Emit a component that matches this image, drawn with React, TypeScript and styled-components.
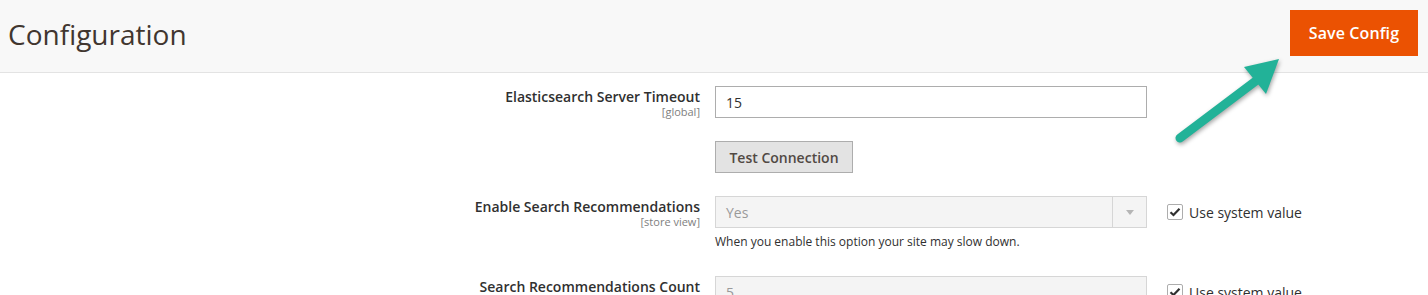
import React from 'react'
import styled, { createGlobalStyle } from 'styled-components'

const GlobalStyle = createGlobalStyle`
   html, body {
      margin: 0;
      padding: 0;
      background: #fff;
      font-family: "Open Sans", "Noto Sans", sans-serif;
      color: #303030;
      overflow: hidden;
   }
`

const Page = styled.div`
   position: relative;
   width: 1428px;
`

const Header = styled.header`
   display: flex;
   align-items: center;
   justify-content: space-between;
   height: 72px;
   padding: 0 10px 0 8px;
   background: #f8f8f8;
   border-bottom: 1px solid #e3e3e3;
`

const Title = styled.h1`
   margin: 0;
   font-size: 28px;
   font-weight: 400;
   color: #41362f;
   line-height: 36px;
   margin-top: -5px;
`

const SaveButton = styled.button`
   height: 46px;
   width: 128px;
   margin-top: -6px;
   border: none;
   background: #eb5202;
   color: #fff;
   font-family: inherit;
   font-size: 16px;
   font-weight: 600;
   letter-spacing: 0.1px;
   cursor: pointer;
`

const Form = styled.div`
   padding-top: 13px;
`

const Row = styled.div<{ $pb?: number }>`
   display: grid;
   grid-template-columns: 700px 432px 1fr;
   column-gap: 15px;
   padding-bottom: ${p => p.$pb ?? 23}px;
`

const Label = styled.div`
   text-align: right;
   padding-top: 2px;
`

const LabelText = styled.div`
   font-size: 14px;
   font-weight: 600;
   line-height: 18px;
   color: #303030;
`

const Scope = styled.div`
   font-size: 11px;
   line-height: 12px;
   color: #808080;
`

const Input = styled.div<{ $disabled?: boolean }>`
   box-sizing: border-box;
   height: 32px;
   padding: 0 10px;
   display: flex;
   align-items: center;
   font-size: 14px;
   border: 1px solid ${p => (p.$disabled ? '#d6d6d6' : '#adadad')};
   background: ${p => (p.$disabled ? '#f4f4f4' : '#fff')};
   color: ${p => (p.$disabled ? '#9a9a9a' : '#303030')};
`

const Select = styled(Input)`
   padding-right: 0;
`

const SelectValue = styled.span`
   flex: 1;
`

const SelectArrow = styled.span`
   align-self: stretch;
   width: 33px;
   border-left: 1px solid #d6d6d6;
   display: flex;
   align-items: center;
   justify-content: center;
   &::after {
      content: '';
      border-left: 4px solid transparent;
      border-right: 4px solid transparent;
      border-top: 5px solid #b5b5b5;
   }
`

const Note = styled.div`
   margin-top: 5px;
   font-size: 12px;
   line-height: 18px;
   color: #303030;
`

const Button = styled.button`
   width: 138px;
   height: 32px;
   border: 1px solid #adadad;
   background: #e3e3e3;
   color: #514943;
   font-family: inherit;
   font-size: 14px;
   font-weight: 600;
   cursor: pointer;
`

const SystemValue = styled.label`
   display: flex;
   align-items: center;
   gap: 6px;
   height: 32px;
   padding-left: 5px;
   font-size: 14px;
   color: #303030;
`

const Box = styled.span`
   box-sizing: border-box;
   width: 16px;
   height: 16px;
   border: 1px solid #adadad;
   border-radius: 2px;
   background: #fff;
   display: flex;
   align-items: center;
   justify-content: center;
`

const Arrow = styled.svg`
   position: absolute;
   left: 1165px;
   top: 48px;
   filter: drop-shadow(1px 2px 2px rgba(0, 0, 0, 0.35));
`

const Check = () => (
   <Box>
      <svg width='12' height='10' viewBox='0 0 12 10'>
         <path d='M1.5 5.2 L4.5 8 L10.5 1.8' fill='none' stroke='#303030' strokeWidth='2.2' />
      </svg>
   </Box>
)

const UseSystem = () => (
   <SystemValue>
      <Check />
      Use system value
   </SystemValue>
)

const App = () => {
   return (
      <Page>
         <GlobalStyle />
         <Header>
            <Title>Configuration</Title>
            <SaveButton>Save Config</SaveButton>
         </Header>
         <Form>
            <Row>
               <Label>
                  <LabelText>Elasticsearch Server Timeout</LabelText>
                  <Scope>[global]</Scope>
               </Label>
               <Input>15</Input>
               <div />
            </Row>
            <Row>
               <div />
               <div>
                  <Button>Test Connection</Button>
               </div>
               <div />
            </Row>
            <Row $pb={25}>
               <Label>
                  <LabelText>Enable Search Recommendations</LabelText>
                  <Scope>[store view]</Scope>
               </Label>
               <div>
                  <Select $disabled>
                     <SelectValue>Yes</SelectValue>
                     <SelectArrow />
                  </Select>
                  <Note>When you enable this option your site may slow down.</Note>
               </div>
               <UseSystem />
            </Row>
            <Row>
               <Label>
                  <LabelText>Search Recommendations Count</LabelText>
                  <Scope>[store view]</Scope>
               </Label>
               <Input $disabled>5</Input>
               <UseSystem />
            </Row>
         </Form>
         <Arrow width='130' height='100' viewBox='0 0 130 100'>
            <line x1='15' y1='90' x2='96' y2='29' stroke='#22b298' strokeWidth='9' strokeLinecap='round' />
            <polygon points='114,11 79,19 101,46' fill='#22b298' />
         </Arrow>
      </Page>
   )
}

export default App
